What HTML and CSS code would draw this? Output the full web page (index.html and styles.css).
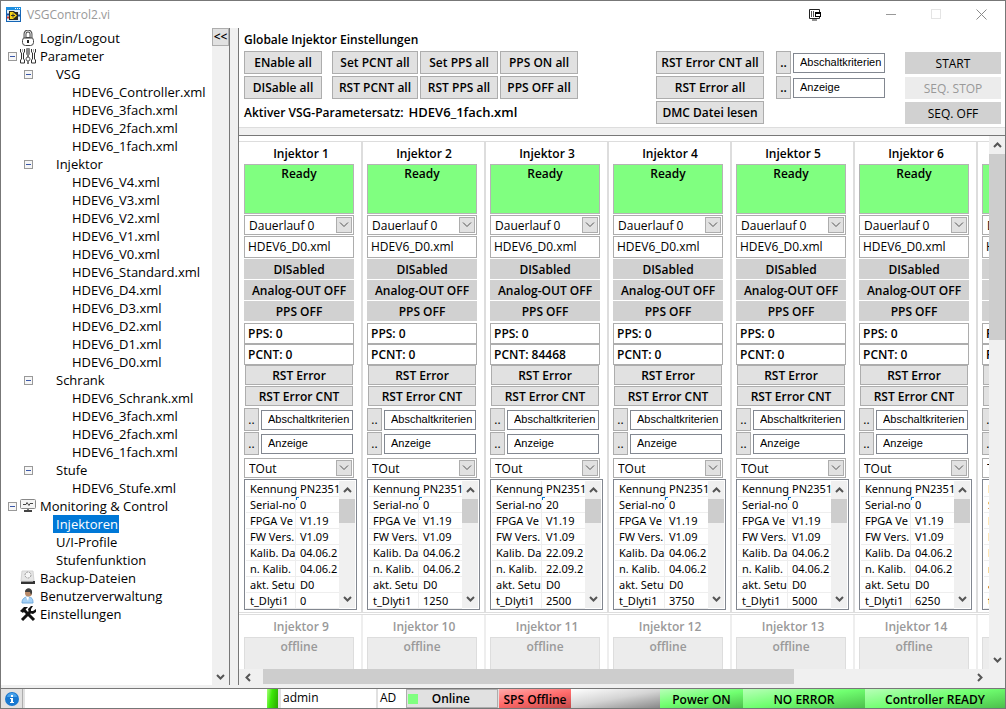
FILE: index.html
```html
<!DOCTYPE html>
<html lang="de">
<head>
    <meta charset="UTF-8">
    <meta name="viewport" content="width=device-width, initial-scale=1.0">
    <title>VSGControl2.vi</title>
    <link rel="stylesheet" href="styles.css">
</head>
<body>

<div class="window">

    <!-- Titelleiste -->
    <header class="titlebar">
        <svg class="app-icon" width="16" height="16" viewBox="0 0 16 16">
            <rect x="0.5" y="0.5" width="14" height="14" fill="#dcecf8" stroke="#1565b5"/>
            <rect x="0" y="0" width="15" height="3" fill="#1f8fe0"/>
            <path d="M9 1.500h1M11 1.500h1M13 1.500h1" stroke="#fff"/>
            <path d="M1 7.500h2M12 8.500h2" stroke="#1b4fa0" stroke-width="2"/>
            <path d="M1 10.500h2" stroke="#d8342a" stroke-width="2"/>
            <path d="M3 4h5l1 1h3v8H3z" fill="#2a2a20"/>
            <path d="M4 5h3l4 3.500L7 12H4z" fill="#f7d417"/>
            <path d="M5 8.500h4M7 6.500v4" stroke="#333"/>
        </svg>
        <span class="title">VSGControl2.vi</span>
        <svg class="dock-icon" width="12" height="12" viewBox="0 0 12 12">
            <path d="M10.500 3V0.500H0.500V9.500H10.500V8M3 11h5" fill="none" stroke="#222"/>
            <path d="M2.500 2v6M4.500 2v6" stroke="#555"/>
            <rect x="6.500" y="3.500" width="5" height="4" fill="#fff" stroke="#000"/>
            <path d="M6 4h6" stroke="#000" stroke-width="2"/>
        </svg>
        <div class="window-buttons">
            <button aria-label="Minimieren"><svg width="10" height="10"><path d="M0 5.500h10" stroke="#999"/></svg></button>
            <button aria-label="Maximieren"><svg width="10" height="10"><rect x="0.500" y="0.500" width="9" height="9" fill="none" stroke="#e4e4e4"/></svg></button>
            <button aria-label="Schließen"><svg width="11" height="11"><path d="M0.500 0.500l10 10M10.500 0.500l-10 10" stroke="#8a8a8a"/></svg></button>
        </div>
    </header>

    <div class="workspace">

        <!-- Navigationsbaum -->
        <nav class="sidebar">
            <ul class="tree">
                <li class="lvl0"><span class="slot"></span>
                    <svg width="16" height="16" viewBox="0 0 16 16"><path d="M5 8V4a3 3 0 0 1 6 0v4" fill="none" stroke="#555" stroke-width="3"/><path d="M5 8V4a3 3 0 0 1 6 0v4" fill="none" stroke="#ddd" stroke-width="1"/><rect x="2.500" y="7.500" width="11" height="8" rx="3" fill="#fff" stroke="#444"/><path d="M4 8.500h8" stroke="#999"/><rect x="7" y="10" width="2" height="3" fill="#222"/></svg>
                    <a href="#">Login/Logout</a></li>
                <li class="lvl0"><button class="toggle" aria-label="Parameter zuklappen"></button>
                    <svg width="16" height="16" viewBox="0 0 16 16"><rect x="6" y="0" width="4" height="7" rx="1" fill="#888"/><path d="M8 7v3" stroke="#777" stroke-width="2"/><circle cx="8" cy="11" r="2" fill="#fff" stroke="#555"/><path d="M8 13v3" stroke="#777" stroke-width="2"/><path d="M0.500 1v3l1 1v6l-1 1v3h4v-3l-1-1V5l1-1V1M11.500 1v3l1 1v6l-1 1v3h4v-3l-1-1V5l1-1V1" fill="#fff" stroke="#333"/><path d="M2.500 1v3M13.500 1v3" stroke="#aaa"/></svg>
                    <a href="#">Parameter</a></li>
                <li class="lvl1"><button class="toggle" aria-label="VSG zuklappen"></button><a href="#">VSG</a></li>
                <li class="lvl2"><a href="#">HDEV6_Controller.xml</a></li>
                <li class="lvl2"><a href="#">HDEV6_3fach.xml</a></li>
                <li class="lvl2"><a href="#">HDEV6_2fach.xml</a></li>
                <li class="lvl2"><a href="#">HDEV6_1fach.xml</a></li>
                <li class="lvl1"><button class="toggle" aria-label="Injektor zuklappen"></button><a href="#">Injektor</a></li>
                <li class="lvl2"><a href="#">HDEV6_V4.xml</a></li>
                <li class="lvl2"><a href="#">HDEV6_V3.xml</a></li>
                <li class="lvl2"><a href="#">HDEV6_V2.xml</a></li>
                <li class="lvl2"><a href="#">HDEV6_V1.xml</a></li>
                <li class="lvl2"><a href="#">HDEV6_V0.xml</a></li>
                <li class="lvl2"><a href="#">HDEV6_Standard.xml</a></li>
                <li class="lvl2"><a href="#">HDEV6_D4.xml</a></li>
                <li class="lvl2"><a href="#">HDEV6_D3.xml</a></li>
                <li class="lvl2"><a href="#">HDEV6_D2.xml</a></li>
                <li class="lvl2"><a href="#">HDEV6_D1.xml</a></li>
                <li class="lvl2"><a href="#">HDEV6_D0.xml</a></li>
                <li class="lvl1"><button class="toggle" aria-label="Schrank zuklappen"></button><a href="#">Schrank</a></li>
                <li class="lvl2"><a href="#">HDEV6_Schrank.xml</a></li>
                <li class="lvl2"><a href="#">HDEV6_3fach.xml</a></li>
                <li class="lvl2"><a href="#">HDEV6_2fach.xml</a></li>
                <li class="lvl2"><a href="#">HDEV6_1fach.xml</a></li>
                <li class="lvl1"><button class="toggle" aria-label="Stufe zuklappen"></button><a href="#">Stufe</a></li>
                <li class="lvl2"><a href="#">HDEV6_Stufe.xml</a></li>
                <li class="lvl0"><button class="toggle" aria-label="Monitoring zuklappen"></button>
                    <svg width="16" height="16" viewBox="0 0 16 16"><rect x="0.500" y="1.500" width="15" height="9" rx="1" fill="#f4f4f4" stroke="#888"/><path d="M3 6.500h3l1-2 2 3 1-2h3" fill="none" stroke="#444"/><path d="M8 11v2" stroke="#777" stroke-width="2"/><path d="M4 13h8" stroke="#444" stroke-width="2"/></svg>
                    <a href="#">Monitoring &amp; Control</a></li>
                <li class="lvl1"><span class="slot"></span><a href="#" class="selected">Injektoren</a></li>
                <li class="lvl1"><span class="slot"></span><a href="#">U/I-Profile</a></li>
                <li class="lvl1"><span class="slot"></span><a href="#">Stufenfunktion</a></li>
                <li class="lvl0"><span class="slot"></span>
                    <svg width="16" height="16" viewBox="0 0 16 16"><path d="M2 1h11l1 10H1z" fill="#e6e6e6" stroke="#d4d4d4"/><circle cx="8" cy="5" r="3" fill="#f6f6f6" stroke="#999" stroke-dasharray="2 1"/><rect x="1" y="11" width="14" height="3" fill="#333"/><path d="M1 11.500h12" stroke="#999"/></svg>
                    <a href="#">Backup-Dateien</a></li>
                <li class="lvl0"><span class="slot"></span>
                    <svg width="16" height="16" viewBox="0 0 16 16"><path d="M2 15c0-4 2-6 6-6s5 2 5 6z" fill="#a4d0f5" stroke="#6fa9dc"/><path d="M6 9l2 4 1-4z" fill="#fff"/><circle cx="8.500" cy="5" r="3.500" fill="#b98a68"/><path d="M5 4c0-5 8-5 7 1l-1 2-1-3z" fill="#3d3d3d"/></svg>
                    <a href="#">Benutzerverwaltung</a></li>
                <li class="lvl0"><span class="slot"></span>
                    <svg width="16" height="16" viewBox="0 0 16 16"><path d="M4 4l10 10" stroke="#111" stroke-width="3"/><path d="M0 5l4-4h4L6 3 3 7z" fill="#111"/><path d="M2 14l9-9" stroke="#111" stroke-width="3"/><path d="M13 0l-2 3v2h2l3-2v3l-3 2-4-1-1-4 3-3z" fill="#111"/></svg>
                    <a href="#">Einstellungen</a></li>
            </ul>
            <div class="tree-scroll">
                <button class="collapse">&lt;&lt;</button>
                <svg class="arrow down" width="9" height="6"><path d="M1 1l3.500 3.500L8 1"/></svg>
            </div>
        </nav>

        <main class="content">

            <!-- Globale Einstellungen -->
            <section class="global">
                <div class="global-left">
                    <h1>Globale Injektor Einstellungen</h1>
                    <div class="global-grid">
                        <button class="btn">ENable all</button>
                        <button class="btn wide">Set PCNT all</button>
                        <button class="btn">Set PPS all</button>
                        <button class="btn">PPS ON all</button>
                        <button class="btn">DISable all</button>
                        <button class="btn wide">RST PCNT all</button>
                        <button class="btn">RST PPS all</button>
                        <button class="btn">PPS OFF all</button>
                    </div>
                    <p class="active-set">Aktiver VSG-Parametersatz: <strong>HDEV6_1fach.xml</strong></p>
                </div>
                <div class="global-col reset">
                    <button class="btn">RST Error CNT all</button>
                    <button class="btn">RST Error all</button>
                    <button class="btn">DMC Datei lesen</button>
                </div>
                <div class="global-col criteria">
                    <div class="pick"><button class="btn dots">..</button><input type="text" aria-label="Abschaltkriterien" value="Abschaltkriterien"></div>
                    <div class="pick"><button class="btn dots">..</button><input type="text" aria-label="Anzeige" value="Anzeige"></div>
                </div>
                <div class="global-col sequence">
                    <button class="flat">START</button>
                    <button class="flat" disabled>SEQ. STOP</button>
                    <button class="flat">SEQ. OFF</button>
                </div>
            </section>

            <!-- Injektoren -->
            <section class="injectors">
                <div class="viewport">
                    <div class="row" id="row-online"></div>
                    <div class="row offline" id="row-offline"></div>
                </div>
                <div class="vscroll">
                    <svg class="arrow" width="9" height="6"><path d="M1 5l3.500-3.500L8 5"/></svg>
                    <div class="track"><div class="thumb"></div></div>
                    <svg class="arrow" width="9" height="6"><path d="M1 1l3.500 3.500L8 1"/></svg>
                </div>
                <div class="hscroll">
                    <svg class="arrow" width="6" height="9"><path d="M5 1L1.500 4.500 5 8"/></svg>
                    <div class="track"><div class="thumb"></div></div>
                    <svg class="arrow" width="6" height="9"><path d="M1 1l3.500 3.500L1 8"/></svg>
                </div>
            </section>
        </main>
    </div>

    <!-- Statusleiste -->
    <footer class="statusbar">
        <button class="info" aria-label="Info">
            <svg width="14" height="14" viewBox="0 0 14 14"><circle cx="7" cy="7" r="7" fill="#1878d0"/><path d="M2 5a5 4 0 0 1 10 0z" fill="#4aa3ea"/><path d="M5 6h3v4h1v1H5v-1h1V7H5zM6 3h2v2H6z" fill="#fff"/></svg>
        </button>
        <div class="message"></div>
        <div class="led"></div>
        <div class="user">admin</div>
        <div class="domain">AD</div>
        <button class="online"><span class="square"></span>Online</button>
        <div class="state red">SPS Offline</div>
        <div class="state grey"></div>
        <div class="state green power">Power ON</div>
        <div class="state green error">NO ERROR</div>
        <div class="state green ready">Controller READY</div>
    </footer>
</div>

<script src="script.js"></script>
</body>
</html>
```
FILE: styles.css
```css
* {
    box-sizing: border-box;
}

body {
    margin: 0;
    font-family: "Open Sans", "Noto Sans", sans-serif;
    font-size: 12px;
    line-height: 16px;
    color: #000;
    background-color: #fff;
}

button, input, select {
    font: inherit;
    color: inherit;
    margin: 0;
    padding: 0;
    border-radius: 0;
    min-width: 0;
}

.window {
    display: flex;
    flex-direction: column;
    height: 100vh;
    border: 1px solid #777;
    border-bottom: 0;
    overflow: hidden;
}

/* Titelleiste */
.titlebar {
    display: flex;
    align-items: center;
    flex: none;
    height: 27px;
    padding: 0 18px 0 5px;
}

.title {
    margin-left: 5px;
    flex: 1;
    color: #999;
}

.dock-icon {
    margin-right: 65px;
}

.window-buttons {
    display: flex;
    gap: 35px;
}

.window-buttons button {
    display: flex;
    border: none;
    background: none;
}

.workspace {
    display: flex;
    flex: 1;
    min-height: 0;
    background-color: #f0f0f0;
    padding-bottom: 3px;
}

/* Navigationsbaum */
.sidebar {
    display: flex;
    flex: none;
    width: 229px;
    background-color: #fff;
    border-right: 1px solid #777;
}

.tree {
    flex: 1;
    margin: 0;
    padding: 1px 0 0;
    list-style: none;
    font-size: 13px;
    line-height: 18px;
    white-space: nowrap;
}

.tree li {
    display: flex;
    align-items: center;
    height: 18px;
}

.tree a {
    padding: 0 1px 0 3px;
    color: #000;
    text-decoration: none;
}

.tree a.selected {
    background-color: #0078d7;
    color: #fff;
}

.lvl0 {
    padding-left: 7px;
}

.lvl0 svg {
    margin: 0 1px 0 3px;
}

.lvl1 {
    padding-left: 23px;
}

.lvl1 a {
    margin-left: 20px;
}

.lvl2 {
    padding-left: 68px;
}

.slot, .toggle {
    flex: none;
    width: 9px;
    height: 9px;
}

.toggle {
    display: flex;
    align-items: center;
    justify-content: center;
    border: 1px solid #999;
    background-color: #f6f6f6;
}

.toggle::before {
    content: "";
    width: 5px;
    height: 1px;
    background-color: #3a57a8;
}

.tree-scroll {
    display: flex;
    flex-direction: column;
    align-items: center;
    justify-content: space-between;
    width: 17px;
    background-color: #f0f0f0;
    padding-bottom: 5px;
}

.collapse {
    width: 17px;
    height: 18px;
    border: 1px solid #adadad;
    background-color: #e1e1e1;
    font-weight: 600;
    line-height: 16px;
}

.arrow {
    flex: none;
    fill: none;
    stroke: #555;
    stroke-width: 2;
}

/* Hauptbereich */
.content {
    display: flex;
    flex-direction: column;
    flex: 1;
    min-width: 0;
    margin-left: 8px;
    border-left: 1px solid #777;
}

.global {
    display: flex;
    flex: none;
    background-color: #fff;
    border-bottom: 1px solid #ddd;
    padding: 3px 4px 3px 5px;
    font-weight: 600;
}

.global-left {
    flex: 1;
}

.global h1 {
    margin: 0 0 3px;
    font-size: 12px;
    line-height: 17px;
    font-weight: 600;
}

.global-grid {
    display: grid;
    grid-template-columns: 78px 94px 78px 78px;
    gap: 2px;
}

.btn {
    height: 23px;
    border: 1px solid #adadad;
    background-color: #e1e1e1;
    font-weight: 600;
    line-height: 16px;
    white-space: nowrap;
}

.btn.wide {
    margin-left: 8px;
}

.active-set {
    margin: 4px 0 0;
    line-height: 18px;
}

.active-set strong {
    margin-left: 2px;
    font-size: 13px;
    font-weight: 600;
}

.global-col {
    display: flex;
    flex-direction: column;
    gap: 2px;
    padding-top: 20px;
}

.reset {
    width: 108px;
    margin-right: 12px;
}

.criteria {
    width: 109px;
    margin-right: 20px;
}

.sequence {
    width: 96px;
}

.pick {
    display: flex;
    gap: 2px;
}

.pick .dots {
    flex: none;
    width: 15px;
}

.pick input {
    flex: 1;
    height: 20px;
    margin-top: 2px;
    padding: 0 0 2px 6px;
    border: 1px solid #828790;
    background-color: #fff;
    font-family: "Liberation Sans", Arial, sans-serif;
    font-size: 11px;
    font-weight: 400;
}

.flat {
    height: 23px;
    padding-top: 1px;
    border: none;
    border-top: 1px solid #fff;
    background-color: #d1d1d1;
    font-weight: 400;
}

.flat:disabled {
    background-color: #ececec;
    color: #999;
}

/* Injektoren */
.injectors {
    display: grid;
    grid-template-columns: 1fr 16px;
    grid-template-rows: 1fr 16px;
    flex: 1;
    min-height: 0;
    margin-top: 7px;
    border-top: 1px solid #777;
}

.viewport {
    overflow: hidden;
    min-width: 0;
    min-height: 0;
    padding-top: 5px;
    background-color: #fff;
}

.row {
    display: flex;
    height: 472px;
    padding-left: 1px;
    border-top: 1px solid #ddd;
    border-bottom: 1px solid #ddd;
}

.row.offline {
    margin-top: 1px;
}

.injector {
    display: flex;
    flex-direction: column;
    flex: none;
    width: 123px;
    padding: 3px 0 0 4px;
    border-right: 2px solid #ddd;
}

.injector h2 {
    width: 114px;
    margin: 0 0 1px;
    font-size: 12px;
    line-height: 18px;
    font-weight: 600;
    text-align: center;
}

.status {
    width: 110px;
    height: 50px;
    border: 1px solid #b4b4b4;
    background-color: #80ff80;
    font-weight: 600;
    line-height: 18px;
    text-align: center;
}

.drop {
    display: flex;
    align-items: center;
    width: 110px;
    height: 20px;
    margin-top: 1px;
    padding: 0 1px 0 4px;
    border: 1px solid #adadad;
    background-color: #fff;
}

.pick + .drop {
    margin: 3px 0 1px;
}

.drop select {
    flex: 1;
    padding-top: 1px;
    border: none;
    background: none;
    appearance: none;
}

.drop-arrow {
    display: flex;
    align-items: center;
    justify-content: center;
    width: 16px;
    height: 16px;
    border: 1px solid #adadad;
    background-color: #e1e1e1;
    pointer-events: none;
}

.drop-arrow svg {
    fill: none;
    stroke: #555;
}

.file {
    width: 110px;
    height: 22px;
    margin: 1px 0;
    padding: 0 3px 2px;
    border: 1px solid #adadad;
}

.bar {
    width: 110px;
    height: 20px;
    margin-bottom: 1px;
    padding-top: 1px;
    border: none;
    background-color: #d1d1d1;
    font-weight: 600;
}

.value {
    width: 110px;
    height: 21px;
    padding: 2px 3px 0;
    border: 1px solid #adadad;
    font-weight: 600;
}

.bar + .value {
    margin-top: 1px;
}

.injector > .btn {
    width: 108px;
    height: 20px;
    margin: 0 0 1px 1px;
    padding-top: 1px;
}

.injector .pick {
    width: 109px;
    margin-top: 1px;
}

.injector .pick .dots {
    font-weight: 400;
}

.device {
    display: flex;
    width: 113px;
    height: 131px;
    padding: 1px;
    border: 1px solid #828790;
    background-color: #fff;
}

.device table {
    flex: none;
    width: 93px;
    table-layout: fixed;
    border-collapse: separate;
    border-spacing: 0;
    font-family: "Noto Sans", "Open Sans", sans-serif;
    font-size: 11px;
}

.device th, .device td {
    height: 16px;
    padding: 0 0 0 4px;
    border-bottom: 1px solid #eee;
    font-weight: 400;
    line-height: 15px;
    text-align: left;
    white-space: nowrap;
}

.device th {
    width: 50px;
    border-right: 1px solid #eee;
}

.device .cursor {
    background: linear-gradient(#0078d7, #0078d7) 0 0 / 3px 1px no-repeat, linear-gradient(#0078d7, #0078d7) 0 0 / 1px 3px no-repeat;
}

/* Bildlaufleisten */
.mini-scroll, .vscroll {
    display: flex;
    flex-direction: column;
    align-items: center;
    width: 16px;
    padding: 6px 0;
    background-color: #f0f0f0;
}

.track {
    flex: 1;
    align-self: stretch;
}

.thumb {
    background-color: #cdcdcd;
}

.mini-scroll .track {
    padding-top: 6px;
}

.mini-scroll .thumb {
    height: 24px;
}

.vscroll .track {
    padding-top: 6px;
}

.vscroll .thumb {
    height: 37%;
}

.hscroll {
    grid-column: 1 / 3;
    display: flex;
    align-items: center;
    padding: 0 22px 0 6px;
    background-color: #f0f0f0;
}

.hscroll .track {
    padding: 0 6px 0 12px;
}

.hscroll .thumb {
    width: 75%;
    height: 15px;
}

/* Injektoren ohne Verbindung */
.offline h2, .offline .status {
    color: #999;
}

.offline .status {
    background-color: #ececec;
    border-color: #ddd;
}

.offline .injector {
    border-color: #eee;
}

/* Statusleiste */
.statusbar {
    display: flex;
    flex: none;
    height: 21px;
    border-top: 1px solid #777;
    border-bottom: 1px solid #777;
    background-color: #e1e1e1;
    line-height: 18px;
}

.info {
    display: flex;
    align-items: center;
    justify-content: center;
    width: 22px;
    border: none;
    border-right: 1px solid #adadad;
    background-color: #e1e1e1;
}

.message {
    flex: 242;
    margin-left: 2px;
    background-color: #fff;
}

.led {
    width: 11px;
    background: linear-gradient(100deg, #a8ff7c, #3ce808 40%, #2aa800);
}

.user {
    width: 95px;
    margin-left: 3px;
    padding-left: 2px;
    background-color: #fff;
}

.domain {
    width: 28px;
    margin-left: 2px;
    padding-left: 2px;
    background-color: #fff;
}

.online {
    display: flex;
    align-items: center;
    justify-content: space-between;
    width: 92px;
    margin-right: 1px;
    padding: 1px 27px 0 1px;
    border: 1px solid #adadad;
    background-color: #e1e1e1;
    font-weight: 600;
}

.square {
    width: 10px;
    height: 10px;
    background-color: #80ff80;
}

.state {
    padding-top: 1px;
    font-weight: 600;
    line-height: 20px;
    text-align: center;
    white-space: nowrap;
}

.red {
    width: 72px;
    background: linear-gradient(170deg, #ffaaaa, #ff6a6a 50%, #c04a4a);
}

.grey {
    flex: 89;
    background: linear-gradient(170deg, #fff, #d4d4d4 50%, #888);
}

.green {
    background: linear-gradient(170deg, #b8ffb8, #70ff70 50%, #4cc04c);
}

.power {
    flex: 83;
}

.error {
    flex: 122;
}

.ready {
    flex: 140;
}
```
FILE: script.js
```js
const injectors = [
    { nr: 1, pcnt: 0, serial: "0", date: "04.06.2", delay: 0 },
    { nr: 2, pcnt: 0, serial: "0", date: "04.06.2", delay: 1250 },
    { nr: 3, pcnt: 84468, serial: "20", date: "22.09.2", delay: 2500 },
    { nr: 4, pcnt: 0, serial: "0", date: "04.06.2", delay: 3750 },
    { nr: 5, pcnt: 0, serial: "0", date: "04.06.2", delay: 5000 },
    { nr: 6, pcnt: 0, serial: "0", date: "04.06.2", delay: 6250 },
    { nr: 7, pcnt: 0, serial: "0", date: "04.06.2", delay: 7500 }
];

function dropDown(label, value) {
    return `
        <div class="drop">
            <select aria-label="${label}"><option>${value}</option></select>
            <span class="drop-arrow"><svg width="10" height="6"><path d="M1 0.5l4 4 4-4"/></svg></span>
        </div>`;
}

function pick(text) {
    return `<div class="pick"><button class="btn dots">..</button><input type="text" aria-label="${text}" value="${text}"></div>`;
}

function deviceTable(inj) {
    const rows = [
        ["Kennung", "PN2351"],
        ["Serial-no", inj.serial],
        ["FPGA Ve", "V1.19"],
        ["FW Vers.", "V1.09"],
        ["Kalib. Da", inj.date],
        ["n. Kalib.", inj.date],
        ["akt. Setu", "D0"],
        ["t_Dlyti1", inj.delay]
    ];
    const body = rows.map((r, i) =>
        `<tr><th scope="row">${r[0]}</th><td class="${i === 1 ? "cursor" : ""}">${r[1]}</td></tr>`
    ).join("");

    return `
        <div class="device">
            <table>${body}</table>
            <div class="mini-scroll">
                <svg class="arrow" width="9" height="6"><path d="M1 5l3.5-3.5L8 5"/></svg>
                <div class="track"><div class="thumb"></div></div>
                <svg class="arrow" width="9" height="6"><path d="M1 1l3.5 3.5L8 1"/></svg>
            </div>
        </div>`;
}

// Verbundene Injektoren
document.getElementById("row-online").innerHTML = injectors.map(inj => `
    <article class="injector">
        <h2>Injektor ${inj.nr}</h2>
        <div class="status">Ready</div>
        ${dropDown("Betriebsart", "Dauerlauf 0")}
        <input class="file" type="text" aria-label="Parameterdatei" value="HDEV6_D0.xml">
        <button class="bar">DISabled</button>
        <button class="bar">Analog-OUT OFF</button>
        <button class="bar">PPS OFF</button>
        <div class="value">PPS: 0</div>
        <div class="value">PCNT: ${inj.pcnt}</div>
        <button class="btn">RST Error</button>
        <button class="btn">RST Error CNT</button>
        ${pick("Abschaltkriterien")}
        ${pick("Anzeige")}
        ${dropDown("Ausgang", "TOut")}
        ${deviceTable(inj)}
    </article>`).join("");

// Zweite Reihe, nicht verbunden
document.getElementById("row-offline").innerHTML = injectors.map(inj => `
    <article class="injector">
        <h2>Injektor ${inj.nr + 8}</h2>
        <div class="status">offline</div>
    </article>`).join("");
```
